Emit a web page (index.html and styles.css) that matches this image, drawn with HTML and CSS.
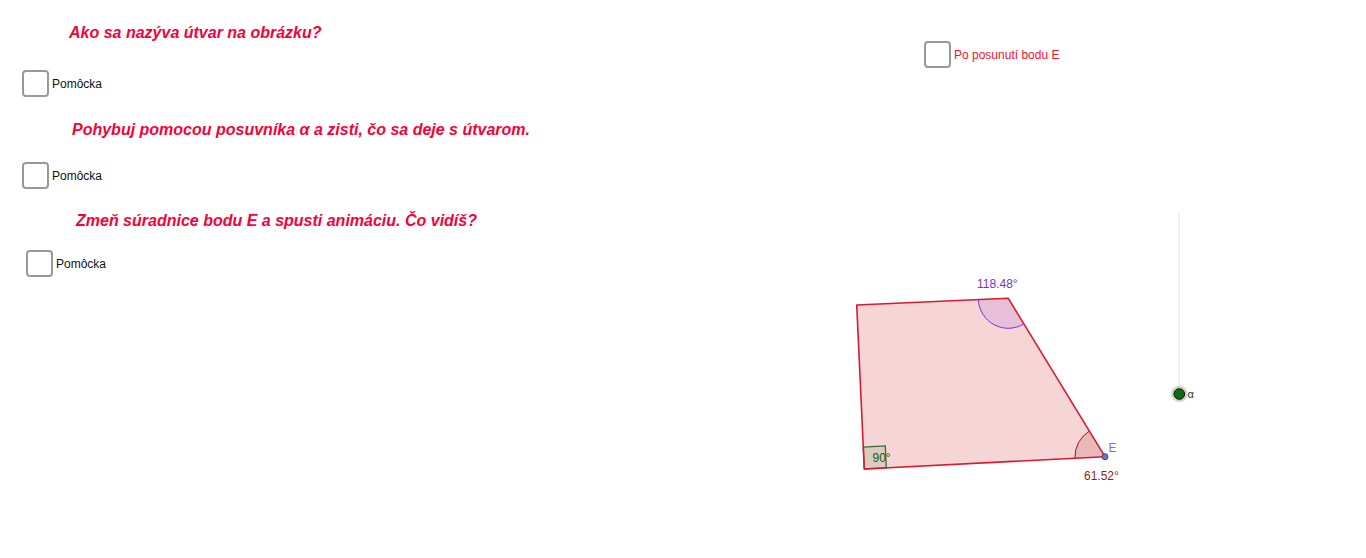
FILE: index.html
```html
<!DOCTYPE html>
<html lang="sk">
<head>
<meta charset="utf-8">
<title>Útvar</title>
<link rel="stylesheet" href="styles.css">
</head>
<body>
<div class="applet">
  <div class="tasks">
    <h2 class="q q1">Ako sa nazýva útvar na obrázku?</h2>
    <label class="cb cb1"><span class="box"></span><span class="cb-text">Pomôcka</span></label>
    <h2 class="q q2">Pohybuj pomocou posuvníka α a zisti, čo sa deje s útvarom.</h2>
    <label class="cb cb2"><span class="box"></span><span class="cb-text">Pomôcka</span></label>
    <h2 class="q q3">Zmeň súradnice bodu E a spusti animáciu. Čo vidíš?</h2>
    <label class="cb cb3"><span class="box"></span><span class="cb-text">Pomôcka</span></label>
  </div>

  <label class="cb cb-move"><span class="box"></span><span class="cb-text red">Po posunutí bodu E</span></label>

  <svg class="drawing" width="1366" height="558" viewBox="0 0 1366 558" xmlns="http://www.w3.org/2000/svg">
    <polygon points="856.7,305 1008.3,298.3 1105,456.7 864.3,469" fill="#f6d5d7" stroke="none"/>
    <path d="M1008.3 298.3 L978.3 299.6 A30 30 0 0 0 1023.9 323.9 Z" fill="#e7c0d8" stroke="none"/>
    <path d="M978.3 299.6 A30 30 0 0 0 1023.9 323.9" fill="none" stroke="#7b33d6" stroke-width="1"/>
    <path d="M1105 456.7 L1089.4 431.1 A30 30 0 0 0 1075 458.2 Z" fill="#e9b9ba" stroke="none"/>
    <path d="M1089.4 431.1 A30 30 0 0 0 1075 458.2" fill="none" stroke="#a1141c" stroke-width="1"/>
    <polygon points="864.3,469 863.3,447 885.3,445.9 886.3,467.9" fill="#dccbc0" stroke="#386b38" stroke-width="1.3"/>
    <polygon points="856.7,305 1008.3,298.3 1105,456.7 864.3,469" fill="none" stroke="#d81a30" stroke-width="1.6" stroke-linejoin="round"/>
    <text x="872.5" y="461.5" class="lbl" fill="#0b650b">90°</text>
    <text x="977" y="287.5" class="lbl" fill="#7e2fd3">118.48°</text>
    <text x="1084" y="479.5" class="lbl" fill="#9a1a22">61.52°</text>
    <text x="1108.5" y="451.5" class="lbl" fill="#6f6fff">E</text>
    <circle cx="1105" cy="456.7" r="3" fill="#6f73c9" stroke="#333" stroke-width="0.8"/>

    <line x1="1179.3" y1="213" x2="1179.3" y2="394" stroke="#e9ecea" stroke-width="1.5"/>
    <circle cx="1179.3" cy="394" r="8.3" fill="#cdd6cd"/>
    <circle cx="1179.3" cy="394" r="5.3" fill="#0f6a10" stroke="#111" stroke-width="1"/>
    <text x="1187.5" y="397.5" class="lbl small" fill="#1f3b1f">α</text>
  </svg>
</div>
</body>
</html>
```
FILE: styles.css
```css
html, body {
  margin: 0;
  padding: 0;
  background: #ffffff;
}

body {
  font-family: "Liberation Sans", Arial, sans-serif;
}

.applet {
  position: relative;
  width: 1366px;
  height: 558px;
  overflow: hidden;
  background: #ffffff;
}

.tasks {
  display: flex;
  flex-direction: column;
  align-items: flex-start;
  padding-top: 23px;
}

.q {
  margin: 0;
  font-size: 16px;
  line-height: 20px;
  font-weight: bold;
  font-style: italic;
  color: #f80038;
  white-space: nowrap;
}

.q1 { margin-left: 69px; }
.q2 { margin-left: 72px; margin-top: 23px; }
.q3 { margin-left: 76px; margin-top: 22px; }

.cb {
  display: flex;
  align-items: center;
  gap: 3px;
  font-size: 12px;
  line-height: 14px;
  color: #111;
}

.cb1 { margin-left: 22px; margin-top: 27px; }
.cb2 { margin-left: 22px; margin-top: 22px; }
.cb3 { margin-left: 26px; margin-top: 19px; }

.box {
  display: block;
  width: 27px;
  height: 27px;
  box-sizing: border-box;
  border: 2px solid #999999;
  border-radius: 4px;
  background: #ffffff;
}

.cb-text {
  display: block;
}

.red {
  color: #f51030;
}

.cb-move {
  position: absolute;
  left: 924px;
  top: 41px;
}

.drawing {
  position: absolute;
  left: 0;
  top: 0;
  pointer-events: none;
}

.lbl {
  font-family: "Liberation Sans", Arial, sans-serif;
  font-size: 12px;
}

.lbl.small {
  font-size: 11px;
}
```
